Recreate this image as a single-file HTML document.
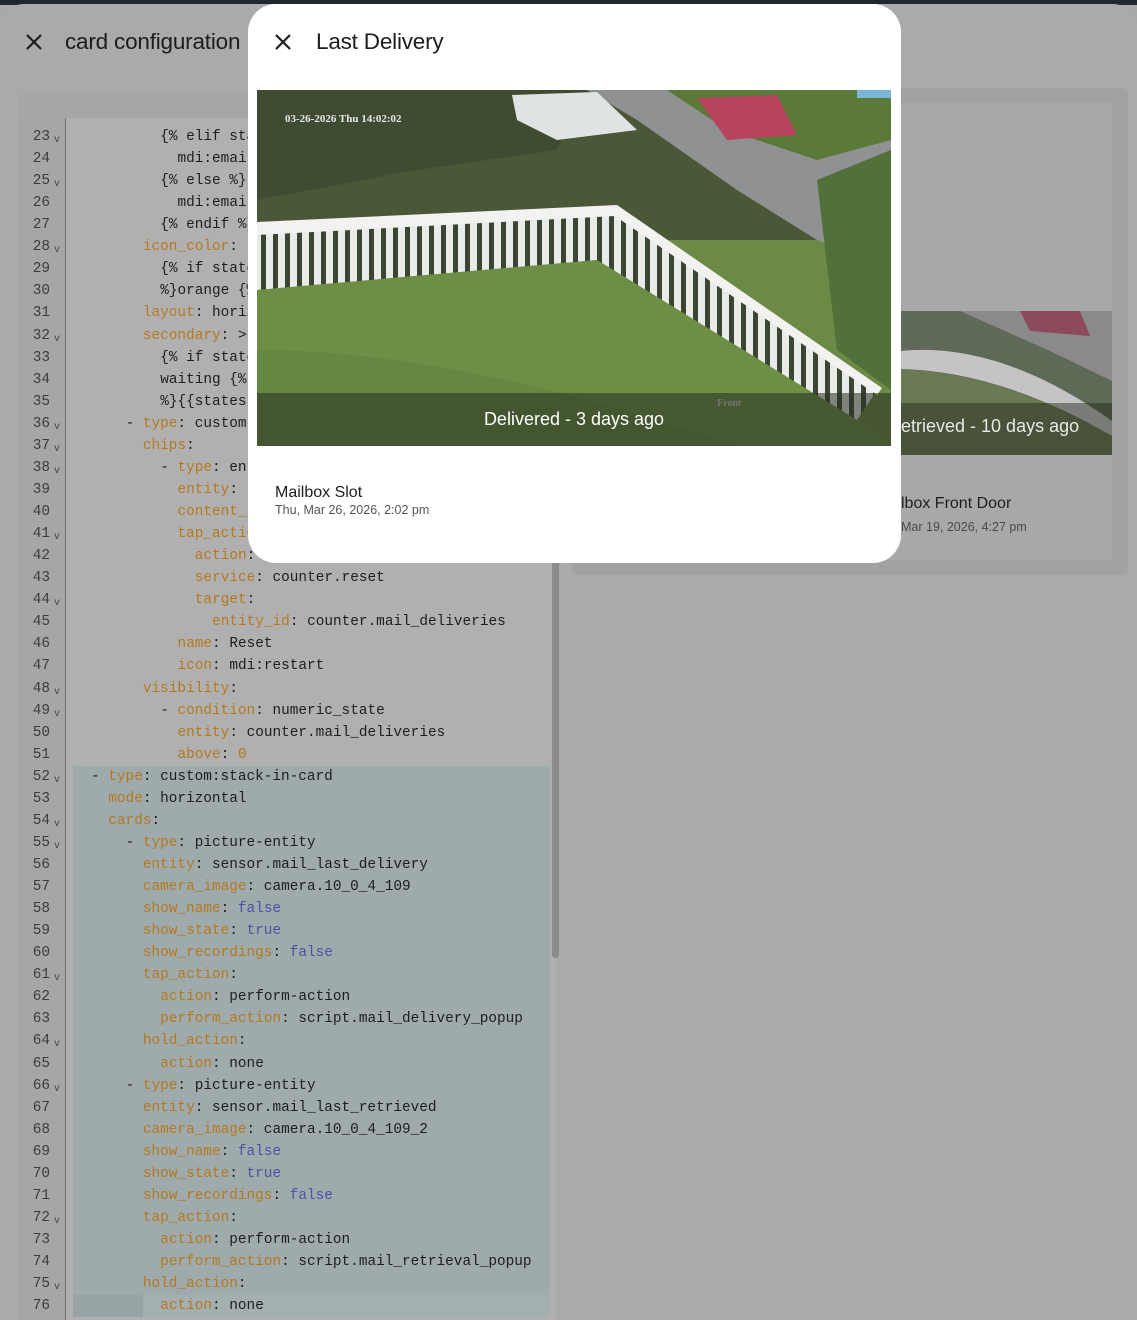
<!DOCTYPE html>
<html><head><meta charset="utf-8"><style>
*{margin:0;padding:0;box-sizing:border-box}
body{width:1137px;height:1320px;overflow:hidden;background:#a9a9a9;font-family:"Liberation Sans",sans-serif;position:relative}
.top{position:absolute;left:0;top:0;width:1137px;height:5px;background:#22272d}
.dlg{position:absolute;left:0;top:4px;width:1137px;height:1316px;background:#aaaaaa;border-radius:24px 24px 0 0}
.h1{position:absolute;left:65px;top:29px;font-size:22.5px;color:#1c1c1c;letter-spacing:-0.2px}
.x{position:absolute;width:18px;height:18px}
.editor{position:absolute;left:18px;top:90px;width:538px;height:1230px;background:#b0b0b0}
.edtop{position:absolute;left:18px;top:90px;width:538px;height:28px;background:#a7a7a7}
.gutter{position:absolute;left:18px;top:118px;width:48px;height:1202px;background:#a6a6a6;border-right:1px solid #6f6f6f}
.hl{position:absolute;left:73px;top:766px;width:477px;height:530px;background:#9eaaab}
.cur{position:absolute;left:73px;top:1295px;width:477px;height:22px;background:#a4afb0}
.cur2{position:absolute;left:73px;top:1295px;width:70px;height:22px;background:#97a3a5}
.sb{position:absolute;left:552px;top:118px;width:7px;height:840px;background:#8c8c8c;border-radius:3px}
.ln{position:absolute;left:18px;width:32px;text-align:right;font-family:"Liberation Mono",monospace;font-size:14.4px;color:#3c3c3c}
.fd{position:absolute;left:54px;font-size:10px;color:#444;font-family:"Liberation Mono",monospace}
.row{position:absolute;left:91px;font-family:"Liberation Mono",monospace;font-size:14.4px;white-space:pre;color:#1e1e1e}
.k{color:#b5791f}.b{color:#4d52a3}
.prev{position:absolute;left:572px;top:88px;width:556px;height:487px;background:#a2a2a2;border-radius:6px}
.pcard{position:absolute;left:587px;top:103px;width:525px;height:457px;background:#a8a8a8}
.modal{position:absolute;left:248px;top:4px;width:653px;height:559px;background:#fff;border-radius:28px}
.photo{position:absolute;left:257px;top:90px;width:634px;height:356px;overflow:hidden}
.cap{position:absolute;left:0;bottom:0;width:100%;height:53px;background:rgba(40,45,35,.55);color:#fff;font-size:18px;text-align:center;line-height:52px}
</style></head><body>
<div class="top"></div>
<div class="dlg"></div>
<svg class="x" style="left:25px;top:33px" viewBox="0 0 18 18"><path d="M2 2L16 16M16 2L2 16" stroke="#1c1c1c" stroke-width="2.2"/></svg>
<div class="h1">card configuration</div>
<div class="editor"></div><div class="edtop"></div><div class="gutter"></div>
<div class="hl"></div><div class="cur"></div><div class="cur2"></div>
<div class="sb"></div>
<div id="code"></div>
<div class="prev"></div><div class="pcard"></div>
<svg style="position:absolute;left:900px;top:311px" width="212" height="144" viewBox="0 0 212 144">
<rect width="212" height="144" fill="#5d6a55"/>
<rect width="212" height="40" fill="#5f6a58"/>
<path d="M60 0L212 0 212 70 150 40Z" fill="#8a8a8a"/>
<path d="M120 0L180 0 190 25 130 20Z" fill="#8c4b5c"/>
<path d="M0 40Q100 30 212 110L212 125Q100 60 0 58Z" fill="#c4c4c4"/>
<path d="M0 58Q100 62 212 125L212 144 0 144Z" fill="#6b7a55"/>
<rect y="92" width="212" height="52" fill="rgba(30,35,25,.45)"/>
</svg>
<div style="position:absolute;left:901px;top:416px;font-size:18px;color:#e8e8e8">etrieved - 10 days ago</div>
<div style="position:absolute;left:901px;top:495px;font-size:16px;color:#1e1e1e">lbox Front Door</div>
<div style="position:absolute;left:901px;top:520px;font-size:12.5px;color:#4a4a4a">Mar 19, 2026, 4:27 pm</div>

<div class="modal"></div>
<svg class="x" style="left:274px;top:33px" viewBox="0 0 18 18"><path d="M2 2L16 16M16 2L2 16" stroke="#1c1c1c" stroke-width="2.2"/></svg>
<div style="position:absolute;left:316px;top:29px;font-size:22.5px;color:#1c1c1c;letter-spacing:-0.2px">Last Delivery</div>
<div class="photo">
<svg width="634" height="356" viewBox="0 0 634 356">
<defs><pattern id="bal" width="12" height="20" patternUnits="userSpaceOnUse"><rect width="12" height="20" fill="#e9ebe8"/><rect x="4" width="5" height="20" fill="#3a4632"/></pattern></defs>
<rect width="634" height="356" fill="#6a8a45"/>
<rect width="634" height="150" fill="#4a5838"/>
<path d="M0 0L330 0 300 60 160 80 0 110Z" fill="#3f4c31"/>
<path d="M330 0L634 0 634 180 560 150 480 100 380 30Z" fill="#8f9192"/>
<path d="M410 0L634 0 634 50 560 70 470 40Z" fill="#5b7a3a"/>
<path d="M440 8L520 5 540 45 470 50Z" fill="#b8435e"/>
<rect x="600" y="0" width="34" height="8" fill="#7bb6d6"/>
<path d="M255 5L340 2 380 40 300 50 260 30Z" fill="#dfe3e4"/>
<path d="M560 90L634 60 634 300 580 260Z" fill="#52703a"/>
<path d="M0 135L360 118 620 300 600 330 340 170 0 200Z" fill="url(#bal)"/>
<path d="M0 132L360 115 625 298 620 305 358 126 0 145Z" fill="#f2f3f0"/>
<path d="M0 200L340 170 600 330 634 356 0 356Z" fill="#6d8e45"/>
<path d="M0 260Q200 260 480 356L0 356Z" fill="#5f8440" opacity=".6"/>
<text x="28" y="32" font-family="Liberation Serif,serif" font-size="11" fill="#e8e8e8" font-weight="bold">03-26-2026 Thu 14:02:02</text>
<text x="460" y="316" font-family="Liberation Serif,serif" font-size="10" fill="#ccc" font-weight="bold">Front</text>
</svg>
<div class="cap">Delivered - 3 days ago</div>
</div>
<div style="position:absolute;left:275px;top:484px;font-size:16px;color:#1e1e1e">Mailbox Slot</div>
<div style="position:absolute;left:275px;top:503px;font-size:12.5px;color:#555">Thu, Mar 26, 2026, 2:02 pm</div>

<script>
var L=[
[8,'{% elif states',1],[10,'mdi:email'],[8,'{% else %}',1],[10,'mdi:email'],[8,'{% endif %}'],
[6,'<span class=k>icon_color</span>: ',1],[8,'{% if states'],[8,'%}orange {%'],[6,'<span class=k>layout</span>: horizontal'],
[6,'<span class=k>secondary</span>: >',1],[8,'{% if states'],[8,'waiting {%'],[8,'%}{{states'],
[4,'- <span class=k>type</span>: custom',1],[6,'<span class=k>chips</span>:',1],[8,'- <span class=k>type</span>: entity',1],
[10,'<span class=k>entity</span>: '],[10,'<span class=k>content_info</span>'],[10,'<span class=k>tap_action</span>:',1],
[12,'<span class=k>action</span>: '],[12,'<span class=k>service</span>: counter.reset'],[12,'<span class=k>target</span>:',1],
[14,'<span class=k>entity_id</span>: counter.mail_deliveries'],[10,'<span class=k>name</span>: Reset'],[10,'<span class=k>icon</span>: mdi:restart'],
[6,'<span class=k>visibility</span>:',1],[8,'- <span class=k>condition</span>: numeric_state',1],[10,'<span class=k>entity</span>: counter.mail_deliveries'],
[10,'<span class=k>above</span>: <span class=k>0</span>'],
[0,'- <span class=k>type</span>: custom:stack-in-card',1],[2,'<span class=k>mode</span>: horizontal'],[2,'<span class=k>cards</span>:',1],
[4,'- <span class=k>type</span>: picture-entity',1],[6,'<span class=k>entity</span>: sensor.mail_last_delivery'],
[6,'<span class=k>camera_image</span>: camera.10_0_4_109'],[6,'<span class=k>show_name</span>: <span class=b>false</span>'],
[6,'<span class=k>show_state</span>: <span class=b>true</span>'],[6,'<span class=k>show_recordings</span>: <span class=b>false</span>'],
[6,'<span class=k>tap_action</span>:',1],[8,'<span class=k>action</span>: perform-action'],[8,'<span class=k>perform_action</span>: script.mail_delivery_popup'],
[6,'<span class=k>hold_action</span>:',1],[8,'<span class=k>action</span>: none'],
[4,'- <span class=k>type</span>: picture-entity',1],[6,'<span class=k>entity</span>: sensor.mail_last_retrieved'],
[6,'<span class=k>camera_image</span>: camera.10_0_4_109_2'],[6,'<span class=k>show_name</span>: <span class=b>false</span>'],
[6,'<span class=k>show_state</span>: <span class=b>true</span>'],[6,'<span class=k>show_recordings</span>: <span class=b>false</span>'],
[6,'<span class=k>tap_action</span>:',1],[8,'<span class=k>action</span>: perform-action'],[8,'<span class=k>perform_action</span>: script.mail_retrieval_popup'],
[6,'<span class=k>hold_action</span>:',1],[8,'<span class=k>action</span>: none']
];
var h='';
for(var i=0;i<L.length;i++){var t=129+i*22.06;var n=23+i;
h+='<div class="ln" style="top:'+t+'px">'+n+'</div>';
if(L[i][2])h+='<div class="fd" style="top:'+(t+6)+'px">v</div>';
h+='<div class="row" style="top:'+t+'px;left:'+(91+L[i][0]*8.65)+'px">'+L[i][1]+'</div>';}
document.getElementById('code').innerHTML=h;
</script>
</body></html>
